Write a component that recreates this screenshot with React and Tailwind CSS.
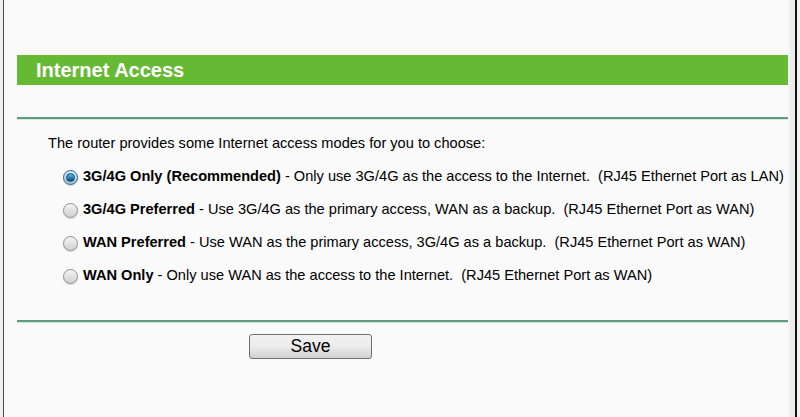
import React, { useState } from 'react';

const modes = [
    { id: 'only3g', label: '3G/4G Only (Recommended)', desc: ' - Only use 3G/4G as the access to the Internet.  (RJ45 Ethernet Port as LAN)' },
    { id: 'pref3g', label: '3G/4G Preferred', desc: ' - Use 3G/4G as the primary access, WAN as a backup.  (RJ45 Ethernet Port as WAN)' },
    { id: 'prefwan', label: 'WAN Preferred', desc: ' - Use WAN as the primary access, 3G/4G as a backup.  (RJ45 Ethernet Port as WAN)' },
    { id: 'onlywan', label: 'WAN Only', desc: ' - Only use WAN as the access to the Internet.  (RJ45 Ethernet Port as WAN)' },
];

const Radio = ({ checked }) => (
    <span
        className={`mt-[2px] w-[15px] h-[15px] shrink-0 rounded-full border flex items-center justify-center shadow-[0_1px_1px_rgba(0,0,0,0.15)] ${checked
            ? 'border-[#2c628b] bg-gradient-to-b from-[#dbeaf5] to-[#9cc3de]'
            : 'border-[#8e8f8f] bg-gradient-to-b from-[#f4f4f4] to-[#d0d0d0]'
            }`}
    >
        {checked && (
            <span className="w-[9px] h-[9px] rounded-full bg-gradient-to-b from-[#5cc0f0] to-[#0b4c7c] border border-[#174d75]" />
        )}
    </span>
);

const Rule = () => (
    <div>
        <div className="h-[2px] bg-[#5e9d7c]" />
        <div className="h-[1px] bg-[#d5e6dc]" />
    </div>
);

export default function App() {
    const [mode, setMode] = useState('only3g');

    return (
        <div className="w-[800px] h-[417px] flex bg-[#fafafa] overflow-hidden" style={{ fontFamily: 'Arial, "Liberation Sans", sans-serif' }}>
            <div className="w-[3px] bg-[#f0f0f0]" />
            <div className="w-[1px] bg-[#4a4a4a]" />

            <div className="w-[784px] pl-[13px] pt-[55px]">
                <div className="h-[30px] bg-[#66b933] flex items-center pl-[19px]">
                    <span className="text-white font-bold text-[20px] leading-none">Internet Access</span>
                </div>

                <div className="mt-[32px]">
                    <Rule />
                </div>

                <div className="pl-[31px] pt-[15px] text-[14.6px] text-black">
                    <p className="leading-[17px]">The router provides some Internet access modes for you to choose:</p>

                    <div className="mt-[16px] pl-[15px] flex flex-col gap-[16px]">
                        {modes.map(m => (
                            <label key={m.id} className="flex items-start gap-[5px] leading-[17px] cursor-pointer" onClick={() => setMode(m.id)}>
                                <Radio checked={mode === m.id} />
                                <span className="whitespace-pre">
                                    <b>{m.label}</b>{m.desc}
                                </span>
                            </label>
                        ))}
                    </div>
                </div>

                <div className="mt-[36px]">
                    <Rule />
                </div>

                <div className="pl-[232px] pt-[11px]">
                    <button className="w-[123px] h-[25px] rounded-[3px] border border-[#707070] bg-gradient-to-b from-[#f2f2f2] via-[#ebebeb] to-[#d2d2d2] text-[17.5px] text-black leading-none">
                        Save
                    </button>
                </div>
            </div>

            <div className="w-[2px] bg-[#f5f5f5]" />
            <div className="w-[5px] bg-[#ebebeb]" />
            <div className="w-[2px] bg-[#111]" />
            <div className="flex-1 bg-[#eef3ee]" />
        </div>
    );
}
